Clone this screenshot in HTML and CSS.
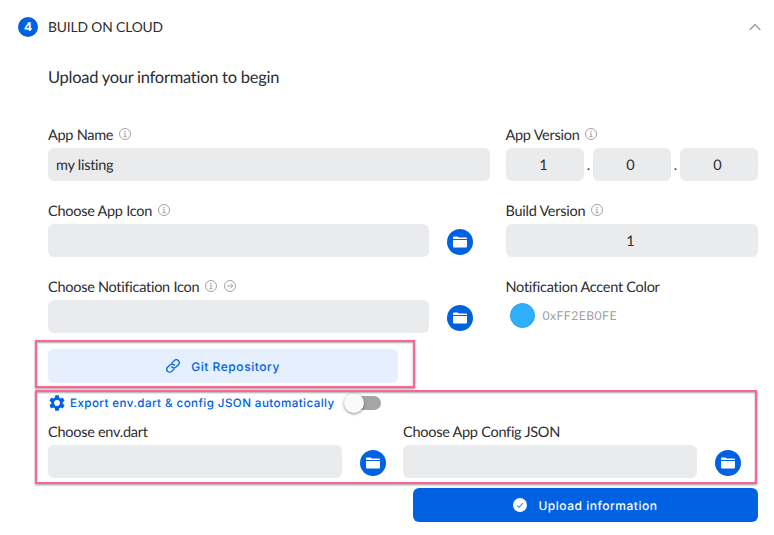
FILE: index.html
```html
<!DOCTYPE html>
<html lang="en">
<head>
<meta charset="utf-8">
<title>Build on cloud</title>
<link rel="stylesheet" href="styles.css">
</head>
<body>
<svg class="defs" width="0" height="0">
  <symbol id="info" viewBox="0 0 12 12"><g fill="none" stroke="#999" stroke-width=".9"><circle cx="6" cy="6" r="5.5"/><path d="M4.8 5.2h1.3v3.4M4.5 8.7h3.1"/></g><circle cx="6" cy="3.4" r=".7" fill="#999"/></symbol>
  <symbol id="arrow" viewBox="0 0 12 12"><g fill="none" stroke="#999" stroke-width=".9"><circle cx="6" cy="6" r="5.5"/><path d="M3 6h5.8M6.7 3.8L8.9 6 6.7 8.2"/></g></symbol>
  <symbol id="folder" viewBox="0 0 14 12"><path fill="#fff" d="M0 3.1V1.5Q0 .5 1 .5h3.6l1.3 1H13q1 0 1 1v.6zM0 4.1h14v6.4q0 1-1 1H1q-1 0-1-1z"/></symbol>
</svg>
<main class="page">
  <header class="step">
    <span class="badge">4</span>
    <h1>BUILD ON CLOUD</h1>
    <svg class="chevron" viewBox="0 0 12 8"><path d="M.7 6.8L6 1.5l5.3 5.3" fill="none" stroke="#8c8c8c" stroke-width="1.2"/></svg>
  </header>
  <section class="content">
    <h2>Upload your information to begin</h2>
    <div class="grid">
      <div class="field">
        <div class="label"><span>App Name</span><svg class="hint"><use href="#info"/></svg></div>
        <div class="input">my listing</div>
      </div>
      <div class="field">
        <div class="label"><span>App Version</span><svg class="hint"><use href="#info"/></svg></div>
        <div class="version"><div class="input center">1</div><i>.</i><div class="input center">0</div><i>.</i><div class="input center">0</div></div>
      </div>
      <div class="field">
        <div class="label"><span>Choose App Icon</span><svg class="hint"><use href="#info"/></svg></div>
        <div class="picker"><div class="input"></div><button class="browse"><svg><use href="#folder"/></svg></button></div>
      </div>
      <div class="field">
        <div class="label"><span>Build Version</span><svg class="hint"><use href="#info"/></svg></div>
        <div class="input center">1</div>
      </div>
      <div class="field">
        <div class="label"><span>Choose Notification Icon</span><svg class="hint"><use href="#info"/></svg><svg class="hint"><use href="#arrow"/></svg></div>
        <div class="picker"><div class="input"></div><button class="browse"><svg><use href="#folder"/></svg></button></div>
      </div>
      <div class="field">
        <div class="label"><span>Notification Accent Color</span></div>
        <div class="color"><span class="swatch"></span><span class="hex">0xFF2EB0FE</span></div>
      </div>
    </div>
    <div class="git-row">
      <button class="git"><svg viewBox="0 0 14 14"><g transform="rotate(-45 7 7)" fill="none" stroke="#0062e3" stroke-width="1.3"><path d="M6.2 9.9H2.3a2.9 2.9 0 0 1 0-5.8h3.4a2.9 2.9 0 0 1 2.7 3.8"/><path d="M7.8 4.1h3.9a2.9 2.9 0 0 1 0 5.8H8.3a2.9 2.9 0 0 1-2.7-3.8"/></g></svg><span>Git Repository</span></button>
    </div>
    <div class="config">
      <div class="export">
        <svg class="gear" viewBox="2 2 20 20"><path fill="#0062e3" d="M19.14 12.94c.04-.3.06-.61.06-.94s-.02-.64-.07-.94l2.03-1.58a.49.49 0 0 0 .12-.61l-1.92-3.32a.49.49 0 0 0-.59-.22l-2.39.96a7 7 0 0 0-1.62-.94l-.36-2.54a.48.48 0 0 0-.48-.41h-3.84a.48.48 0 0 0-.47.41l-.36 2.54a7 7 0 0 0-1.62.94l-2.39-.96a.49.49 0 0 0-.59.22L2.74 8.87a.48.48 0 0 0 .12.61l2.03 1.58a6 6 0 0 0 0 1.88l-2.03 1.58a.49.49 0 0 0-.12.61l1.92 3.32c.12.22.37.29.59.22l2.39-.96c.5.38 1.03.7 1.62.94l.36 2.54c.05.24.24.41.48.41h3.84c.24 0 .44-.17.47-.41l.36-2.54a7 7 0 0 0 1.62-.94l2.39.96c.22.08.47 0 .59-.22l1.92-3.32a.49.49 0 0 0-.12-.61zM12 15.6a3.6 3.6 0 1 1 0-7.2 3.6 3.6 0 0 1 0 7.2z"/></svg>
        <span class="export-text">Export env.dart &amp; config JSON automatically</span>
        <span class="toggle"><span class="knob"></span></span>
      </div>
      <div class="files">
        <div class="field">
          <div class="label"><span>Choose env.dart</span></div>
          <div class="picker"><div class="input"></div><button class="browse"><svg><use href="#folder"/></svg></button></div>
        </div>
        <div class="field">
          <div class="label"><span>Choose App Config JSON</span></div>
          <div class="picker"><div class="input"></div><button class="browse"><svg><use href="#folder"/></svg></button></div>
        </div>
      </div>
    </div>
    <button class="upload"><svg viewBox="0 0 14 14"><circle cx="7" cy="7" r="7" fill="#fff"/><path d="M4.1 7.3l2 1.9 3.8-4" fill="none" stroke="#4b91ec" stroke-width="1.1"/></svg><span>Upload information</span></button>
  </section>
</main>
</body>
</html>
```
FILE: styles.css
```css
* { box-sizing: border-box; }
body { margin: 0; background: #fff; color: #2c2d2f; font-family: Lato, sans-serif; font-size: 14.5px; letter-spacing: -.27px; text-rendering: geometricPrecision; }
h1, h2 { margin: 0; font-weight: 400; }
button { border: 0; padding: 0; display: flex; align-items: center; justify-content: center; text-rendering: inherit; }
svg { display: block; flex: none; }
.defs { position: absolute; }
.page { height: 535px; overflow: hidden; padding: 17px 12px 0 18px; }
.step { display: flex; align-items: center; height: 20px; }
.badge { width: 20px; height: 20px; border-radius: 50%; background: #0062e3; color: #fff; font: 700 12px/20px Inter, sans-serif; text-align: center; }
h1 { margin-left: 10px; font-size: 13.8px; line-height: 20px; letter-spacing: -.12px; }
.chevron { width: 12px; height: 8px; margin-left: auto; margin-right: 1px; }
.content { padding: 28px 4px 0 30px; }
h2 { font-size: 16.5px; line-height: 24px; height: 59px; letter-spacing: -.27px; }
.grid { display: grid; grid-template-columns: 442px 252.5px; column-gap: 15.5px; row-gap: 19px; }
.label { display: flex; align-items: center; height: 24px; line-height: 24px; white-space: nowrap; }
.hint { width: 12px; height: 12px; margin-left: 6px; margin-top: -4px; }
.hint + .hint { margin-left: 7px; }
.input { height: 33px; border-radius: 6px; background: #eaebed; padding: 0 8px; line-height: 35px; flex: 1; }
.center { text-align: center; padding: 0 3px 0 0; }
.version { display: flex; height: 33px; }
.version i { width: 8.5px; text-align: center; font-style: normal; line-height: 35px; }
.picker { display: flex; gap: 18px; padding-right: 17px; }
.browse { width: 26px; height: 26px; margin-top: 4.5px; border-radius: 50%; background: #0062e3; }
.browse svg { width: 14px; height: 12px; }
.color { display: flex; align-items: center; height: 31px; padding-left: 4px; }
.swatch { width: 25px; height: 25px; border-radius: 50%; background: #2eb0fe; border: 1px solid #2a9fe5; }
.hex { margin-left: 8px; font-size: 12.2px; letter-spacing: .45px; color: #a0a0a0; }
.git-row, .config { position: relative; }
.git-row::after, .config::after { content: ""; position: absolute; border: 2px solid #ff6496; box-shadow: 0 1px 2px rgba(0,0,0,.4), inset 0 1px 2px rgba(0,0,0,.35); pointer-events: none; }
.git-row { margin-top: 16px; width: 350px; }
.git-row::after { inset: -9px -17px -5px -13px; }
.git { width: 350px; height: 34px; border-radius: 6px; background: #e5effe; color: #0062e3; font: 500 12px Inter, sans-serif; letter-spacing: .55px; }
.git svg { width: 14px; height: 14px; margin-right: 11px; }
.config { margin-top: 8px; height: 92px; }
.config::after { inset: -1px 1px -1px -13px; }
.export { display: flex; align-items: center; height: 26px; padding-bottom: 2px; color: #0062e3; font: 500 11.6px Inter, sans-serif; letter-spacing: .43px; }
.gear { width: 16px; height: 16px; margin: 0 5px 0 1px; }
.export-text { width: 275px; white-space: nowrap; }
.toggle { position: relative; width: 36px; height: 14px; border-radius: 7px; background: #a5a5a5; }
.knob { position: absolute; left: -1px; top: -3px; width: 20px; height: 20px; border-radius: 50%; background: #fafafa; box-shadow: 0 1px 3px rgba(0,0,0,.45); }
.files { display: grid; grid-template-columns: 355px 355px; margin-top: 4px; }
.upload { width: 345px; height: 34px; margin: 5px 0 0 auto; border-radius: 6px; background: #0062e3; color: #fff; font: 500 12px Inter, sans-serif; letter-spacing: .52px; }
.upload svg { width: 14px; height: 14px; margin-right: 11px; }
```
